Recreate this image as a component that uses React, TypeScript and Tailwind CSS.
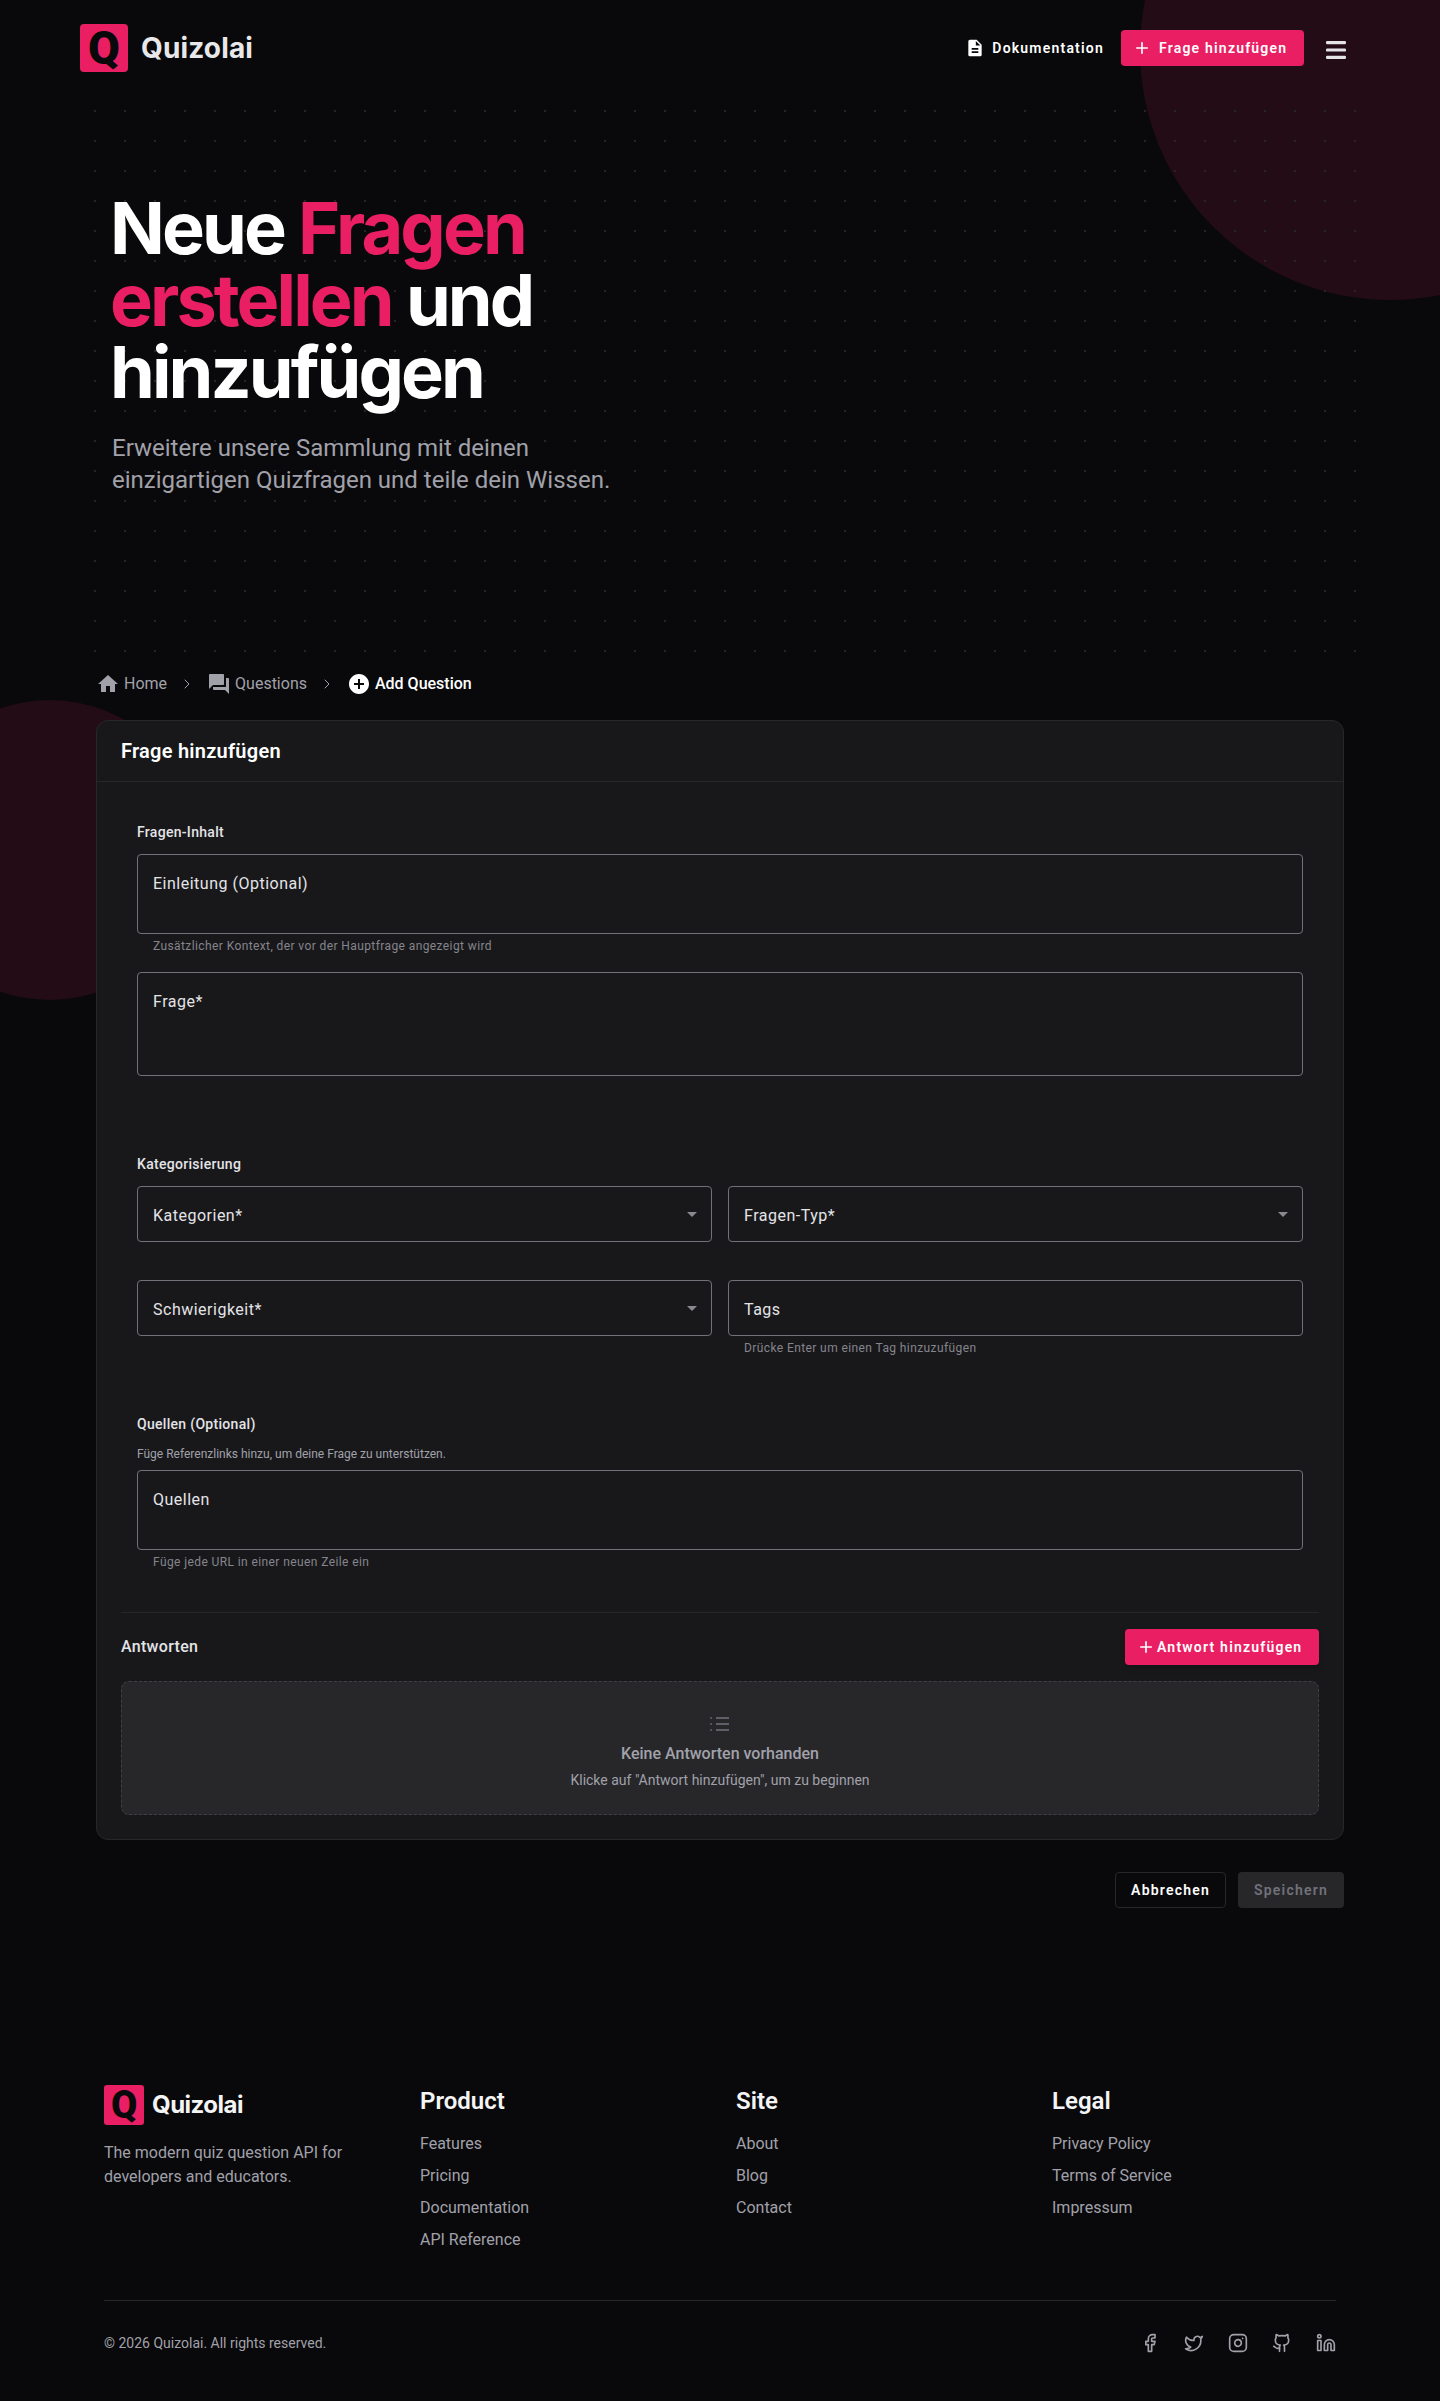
import { Facebook, Github, Instagram, Linkedin, ChevronRight, Twitter } from 'lucide-react'

const PAGE_FONT = 'font-["Roboto",sans-serif]'

const FOOTER_COLUMNS = [
  { title: 'Product', links: ['Features', 'Pricing', 'Documentation', 'API Reference'] },
  { title: 'Site', links: ['About', 'Blog', 'Contact'] },
  { title: 'Legal', links: ['Privacy Policy', 'Terms of Service', 'Impressum'] },
]

function MaterialIcon({ d, className }: { d: string; className?: string }) {
  return (
    <svg viewBox="0 0 24 24" fill="currentColor" className={className}>
      <path d={d} />
    </svg>
  )
}

function LogoMark({ size }: { size: 'lg' | 'sm' }) {
  return (
    <div
      className={
        size === 'lg'
          ? 'flex h-12 w-12 items-center justify-center rounded-[4px] bg-[#e91e63] text-[46px] leading-[48px] font-black text-[#09090b]'
          : 'flex h-10 w-10 items-center justify-center rounded-[3px] bg-[#e91e63] text-[38px] leading-10 font-black text-[#09090b]'
      }
    >
      Q
    </div>
  )
}

function OutlinedField({ label, height, select }: { label: string; height: string; select?: boolean }) {
  return (
    <div className={`relative rounded-[4px] border border-[#71717a] px-[15px] pt-[17px] ${height}`}>
      <span className="block text-base leading-6 tracking-[0.5px] text-[#e4e4e7]">{label}</span>
      {select && (
        <MaterialIcon d="m7 10 5 5 5-5z" className="absolute top-[15px] right-[7px] h-6 w-6 text-[#8a8a8e]" />
      )}
    </div>
  )
}

function HelperText({ children }: { children: string }) {
  return <p className="mt-[2px] px-4 text-xs leading-5 tracking-[0.4px] text-[#85858c]">{children}</p>
}

function SectionLabel({ children }: { children: string }) {
  return <h3 className="text-sm leading-5 font-medium tracking-[0.3px] text-[#e4e4e7]">{children}</h3>
}

export default function App() {
  return (
    <div className={`relative min-h-[2401px] overflow-hidden bg-[#09090b] ${PAGE_FONT}`}>
      <div className="absolute top-[-200px] right-[-200px] h-[500px] w-[500px] rounded-full bg-[#230c16]" />
      <div className="absolute top-[700px] left-[-100px] h-[300px] w-[300px] rounded-full bg-[#230c16]" />

      <header className="relative flex h-24 items-center justify-between px-20">
        <div className="flex items-center gap-[13px]">
          <LogoMark size="lg" />
          <span className='font-["Inter",sans-serif] text-[28px] font-bold tracking-[0.15px] text-[#e8e8ea]'>Quizolai</span>
        </div>
        <div className="flex items-center">
          <div className="flex items-center gap-[7px] text-white">
            <MaterialIcon
              d="M14 2H6c-1.1 0-1.99.9-1.99 2L4 20c0 1.1.89 2 1.99 2H18c1.1 0 2-.9 2-2V8l-6-6zm2 16H8v-2h8v2zm0-4H8v-2h8v2zm-3-5V3.5L18.5 9H13z"
              className="h-5 w-5"
            />
            <span className="text-sm font-semibold tracking-[1.2px]">Dokumentation</span>
          </div>
          <button
            type="button"
            className="ml-[17px] flex h-9 w-[183px] items-center rounded-[4px] bg-[#e91e63] pl-[11px] text-sm font-semibold tracking-[1.2px] text-white"
          >
            <MaterialIcon d="M19 13h-6v6h-2v-6H5v-2h6V5h2v6h6v2z" className="mr-[7px] h-5 w-5" />
            Frage hinzufügen
          </button>
          <svg viewBox="0 0 20 18" className="mt-1 mr-[14px] ml-[22px] h-[18px] w-5 text-[#e4e4e7]" fill="currentColor">
            <rect x="0" y="0" width="20" height="3.2" rx="1.2" />
            <rect x="0" y="7.4" width="20" height="3.2" rx="1.2" />
            <rect x="0" y="14.8" width="20" height="3.2" rx="1.2" />
          </svg>
        </div>
      </header>

      <section className="relative mx-auto h-[570px] w-[1280px] bg-[radial-gradient(circle,#252529_0.8px,transparent_1px)] bg-[size:30px_30px] px-8 pt-24">
        <h1 className='-ml-[2px] font-["Inter",sans-serif] text-7xl leading-[72px] font-bold tracking-[-2.9px] text-white'>
          Neue <span className="text-[#e91e63]">Fragen</span>
          <br />
          <span className="text-[#e91e63]">erstellen</span> und
          <br />
          hinzufügen
        </h1>
        <p className="mt-6 text-2xl leading-8 text-[#a1a1aa]">
          Erweitere unsere Sammlung mit deinen
          <br />
          einzigartigen Quizfragen und teile dein Wissen.
        </p>
      </section>

      <main className="relative mx-auto w-[1248px]">
        <nav className="mt-[6px] flex h-6 items-center text-base">
          <div className="flex items-center gap-1 text-[#a1a1aa]">
            <MaterialIcon d="M10 20v-6h4v6h5v-8h3L12 3 2 12h3v8z" className="h-6 w-6" />
            Home
          </div>
          <ChevronRight size={16} strokeWidth={1.5} className="mx-3 w-4 text-[#a1a1aa]" />
          <div className="flex items-center gap-1 text-[#a1a1aa]">
            <MaterialIcon
              d="M21 6h-2v9H6v2c0 .55.45 1 1 1h11l4 4V7c0-.55-.45-1-1-1zm-4 6V3c0-.55-.45-1-1-1H3c-.55 0-1 .45-1 1v14l4-4h10c.55 0 1-.45 1-1z"
              className="h-6 w-6"
            />
            Questions
          </div>
          <ChevronRight size={16} strokeWidth={1.5} className="mx-3 w-4 text-[#a1a1aa]" />
          <div className="flex items-center gap-1 font-medium text-white">
            <MaterialIcon
              d="M12 2C6.48 2 2 6.48 2 12s4.48 10 10 10 10-4.48 10-10S17.52 2 12 2zm5 11h-4v4h-2v-4H7v-2h4V7h2v4h4v2z"
              className="h-6 w-6"
            />
            Add Question
          </div>
        </nav>

        <div className="mt-6 rounded-xl border border-[#27272a] bg-[#18181b]">
          <div className="flex h-[61px] items-center border-b border-[#27272a] px-6">
            <h2 className="text-xl font-semibold tracking-[0.25px] text-white">Frage hinzufügen</h2>
          </div>

          <div className="px-6 pt-10 pb-6">
            <div className="px-4">
              <SectionLabel>Fragen-Inhalt</SectionLabel>
              <div className="mt-3">
                <OutlinedField label="Einleitung (Optional)" height="h-20" />
                <HelperText>Zusätzlicher Kontext, der vor der Hauptfrage angezeigt wird</HelperText>
              </div>
              <div className="mt-4">
                <OutlinedField label="Frage*" height="h-[104px]" />
              </div>

              <div className="mt-[78px]">
                <SectionLabel>Kategorisierung</SectionLabel>
              </div>
              <div className="mt-3 grid grid-cols-2 gap-x-4 gap-y-[38px]">
                <OutlinedField label="Kategorien*" height="h-14" select />
                <OutlinedField label="Fragen-Typ*" height="h-14" select />
                <OutlinedField label="Schwierigkeit*" height="h-14" select />
                <div className="h-14">
                  <OutlinedField label="Tags" height="h-14" />
                  <HelperText>Drücke Enter um einen Tag hinzuzufügen</HelperText>
                </div>
              </div>

              <div className="mt-[78px]">
                <SectionLabel>Quellen (Optional)</SectionLabel>
              </div>
              <p className="mt-3 text-xs leading-4 text-[#a1a1aa]">Füge Referenzlinks hinzu, um deine Frage zu unterstützen.</p>
              <div className="mt-2">
                <OutlinedField label="Quellen" height="h-20" />
                <HelperText>Füge jede URL in einer neuen Zeile ein</HelperText>
              </div>
            </div>

            <div className="mt-10 border-t border-[#27272a] pt-4">
              <div className="flex items-center justify-between">
                <h3 className="text-base font-medium tracking-[0.3px] text-[#e4e4e7]">Antworten</h3>
                <button
                  type="button"
                  className="flex h-9 w-[194px] items-center gap-px rounded-[4px] bg-[#e91e63] pl-[11px] text-sm font-semibold tracking-[1.2px] text-white shadow-md"
                >
                  <MaterialIcon d="M19 13h-6v6h-2v-6H5v-2h6V5h2v6h6v2z" className="h-5 w-5" />
                  Antwort hinzufügen
                </button>
              </div>
              <div className="mt-4 flex h-[134px] flex-col items-center rounded-lg border border-dashed border-[#3f3f46] bg-[#27272a] pt-[30px]">
                <svg viewBox="0 0 24 24" fill="none" stroke="currentColor" strokeWidth="2" className="h-6 w-6 text-[#5f5f68]">
                  <path d="M8 6h13M8 12h13M8 18h13" />
                  <path strokeLinecap="round" d="M3 6h.01M3 12h.01M3 18h.01" />
                </svg>
                <p className="mt-[6px] text-base leading-6 font-medium text-[#a1a1aa]">Keine Antworten vorhanden</p>
                <p className="mt-1 text-sm leading-5 text-[#a1a1aa]">Klicke auf "Antwort hinzufügen", um zu beginnen</p>
              </div>
            </div>
          </div>
        </div>

        <div className="mt-8 flex justify-end gap-3">
          <button
            type="button"
            className="h-9 w-[111px] rounded-[4px] border border-[#27272a] bg-[#09090b] text-sm font-semibold tracking-[1.2px] text-white"
          >
            Abbrechen
          </button>
          <button
            type="button"
            className="h-9 w-[106px] rounded-[4px] bg-[#27272a] text-sm font-semibold tracking-[1.2px] text-[#71717a]"
          >
            Speichern
          </button>
        </div>
      </main>

      <footer className="relative mx-auto mt-[177px] w-[1232px] pb-12">
        <div className="grid grid-cols-4 gap-8">
          <div>
            <div className="flex items-center gap-2">
              <LogoMark size="sm" />
              <span className='font-["Inter",sans-serif] text-[24px] font-bold tracking-[-0.5px] text-[#f4f4f5]'>Quizolai</span>
            </div>
            <p className="mt-4 text-base leading-6 text-[#a1a1aa]">
              The modern quiz question API for
              <br />
              developers and educators.
            </p>
          </div>
          {FOOTER_COLUMNS.map((column) => (
            <div key={column.title}>
              <h4 className="text-2xl leading-8 font-semibold text-[#f4f4f5]">{column.title}</h4>
              <ul className="mt-[15px]">
                {column.links.map((link) => (
                  <li key={link} className="mb-2 text-base leading-6 text-[#a1a1aa]">
                    {link}
                  </li>
                ))}
              </ul>
            </div>
          ))}
        </div>
        <div className="mt-10 flex items-center justify-between border-t border-[#27272a] pt-8">
          <p className="text-sm leading-5 text-[#a1a1aa]">© 2026 Quizolai. All rights reserved.</p>
          <div className="flex gap-6 text-[#a1a1aa]">
            <Facebook size={20} />
            <Twitter size={20} />
            <Instagram size={20} />
            <Github size={20} />
            <Linkedin size={20} />
          </div>
        </div>
      </footer>
    </div>
  )
}
